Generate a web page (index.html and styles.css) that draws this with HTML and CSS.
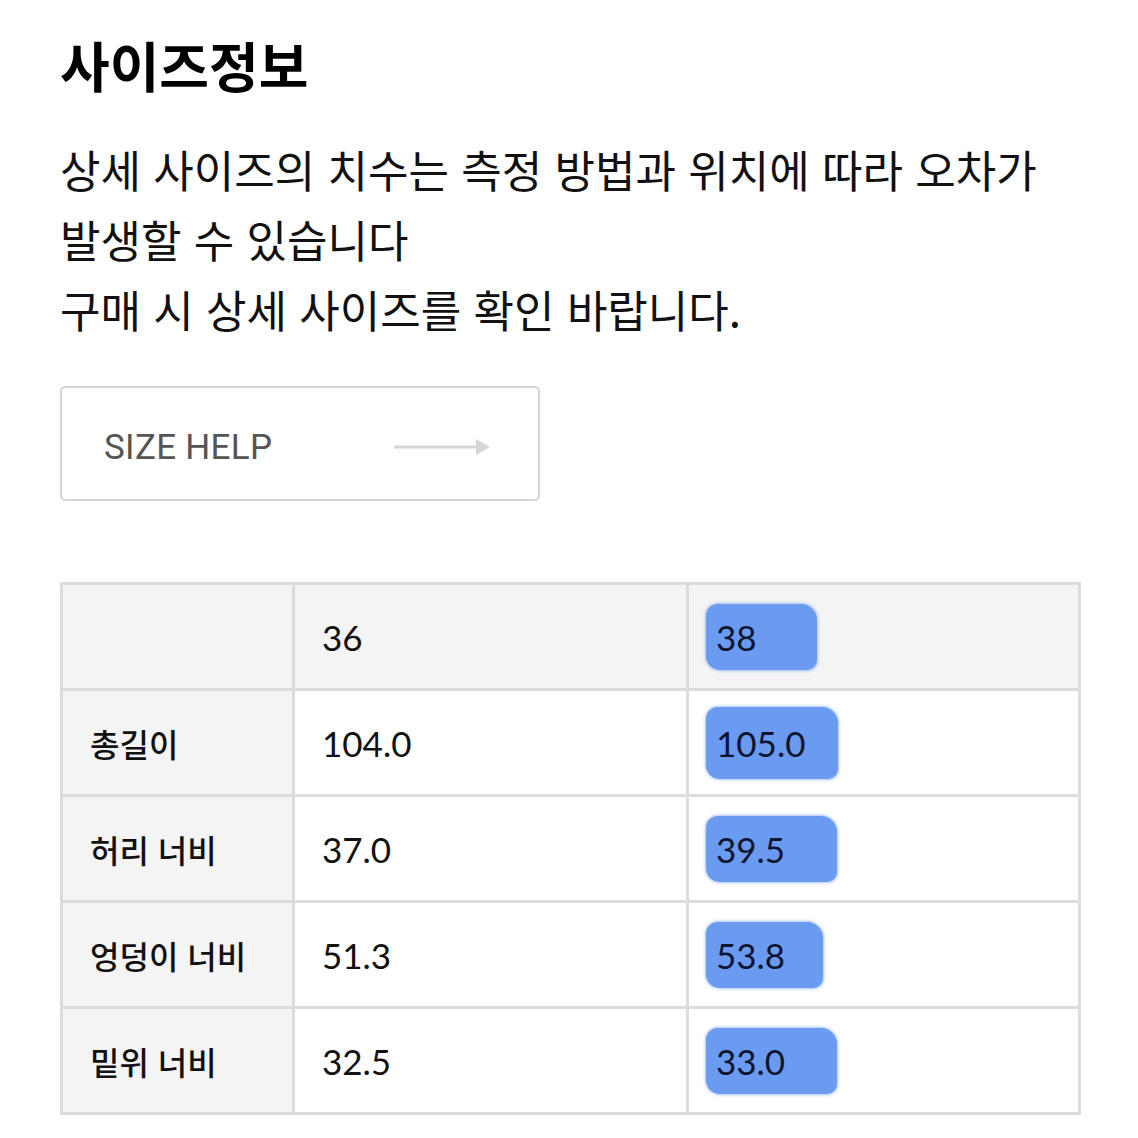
FILE: index.html
```html
<!DOCTYPE html>
<html lang="ko">
<head>
<meta charset="utf-8">
<link rel="stylesheet" href="styles.css">
</head>
<body>
<main class="page">
  <h1 class="title">사이즈정보</h1>
  <p class="desc">상세 사이즈의 치수는 측정 방법과 위치에 따라 오차가<br>발생할 수 있습니다<br>구매 시 상세 사이즈를 확인 바랍니다.</p>
  <a class="size-help" href="#">
    <span class="size-help-label">SIZE HELP</span>
    <svg class="arrow" width="96" height="20" viewBox="0 0 96 20">
      <line x1="0" y1="10" x2="84" y2="10" stroke="#d6d6d6" stroke-width="3"/>
      <polygon points="82,2 96,10 82,18" fill="#d6d6d6"/>
    </svg>
  </a>
  <table class="size-table">
    <colgroup>
      <col class="c1"><col class="c2"><col class="c3">
    </colgroup>
    <tr class="head">
      <th></th>
      <td>36</td>
      <td><span class="hl hl-a">38</span></td>
    </tr>
    <tr>
      <th>총길이</th>
      <td>104.0</td>
      <td><span class="hl hl-b">105.0</span></td>
    </tr>
    <tr>
      <th>허리 너비</th>
      <td>37.0</td>
      <td><span class="hl hl-c">39.5</span></td>
    </tr>
    <tr>
      <th>엉덩이 너비</th>
      <td>51.3</td>
      <td><span class="hl hl-d">53.8</span></td>
    </tr>
    <tr>
      <th>밑위 너비</th>
      <td>32.5</td>
      <td><span class="hl hl-e">33.0</span></td>
    </tr>
  </table>
</main>
</body>
</html>
```

FILE: styles.css
```css
* { box-sizing: border-box; }
html, body { margin: 0; padding: 0; background: #fff; }
body {
  font-family: "Noto Sans CJK KR", "Noto Sans", sans-serif;
  color: #111;
}
.page {
  padding: 29px 60px 0 60px;
}
.title {
  margin: 0;
  font-size: 54px;
  font-weight: 700;
  line-height: 72px;
  color: #000;
}
.desc {
  margin: 33px 0 0 0;
  font-size: 44px;
  line-height: 70px;
  font-weight: 400;
  white-space: nowrap;
  color: #111;
}
.size-help {
  margin-top: 42px;
  width: 480px;
  height: 115px;
  border: 2px solid #d4d4d4;
  border-radius: 5px;
  display: flex;
  align-items: center;
  justify-content: space-between;
  padding: 8px 48px 0 42px;
  text-decoration: none;
}
.size-help-label {
  font-family: Roboto, "Liberation Sans", sans-serif;
  font-size: 35px;
  color: #555;
  letter-spacing: 0.3px;
}
.arrow { display: block; margin-top: -2px; }
.size-table {
  margin-top: 81px;
  width: 1018px;
  border-collapse: collapse;
  border: 3px solid #dcdcdc;
  table-layout: fixed;
}
.c1 { width: 232px; }
.c2 { width: 394px; }
.c3 { width: 392px; }
.size-table th,
.size-table td {
  border: 3px solid #dcdcdc;
  height: 106px;
  padding: 0 0 0 27px;
  text-align: left;
  vertical-align: middle;
}
.size-table th {
  background: #f4f4f4;
  font-family: "Noto Sans CJK KR", sans-serif;
  font-size: 32px;
  font-weight: 500;
  color: #111;
}
.size-table td {
  font-family: Lato, "Noto Sans", sans-serif;
  font-size: 35px;
  color: #111;
}
.size-table .head td { background: #f4f4f4; }
.hl {
  display: inline-block;
  position: relative;
  margin-left: -10px;
  padding: 13px 40px 13px 10px;
  background: #6a9bf0;
  border-radius: 12px 16px 10px 14px;
  box-shadow: 0 0 3px 1px rgba(106, 155, 240, 0.6);
  color: #0b1530;
  line-height: 40px;
}
.hl-a { padding-right: 60px; }
.hl-b { padding-right: 33px; padding-top: 16px; padding-bottom: 16px; }
.hl-c { padding-right: 52px; }
.hl-d { padding-right: 38px; }
.hl-e { padding-right: 52px; }
```
